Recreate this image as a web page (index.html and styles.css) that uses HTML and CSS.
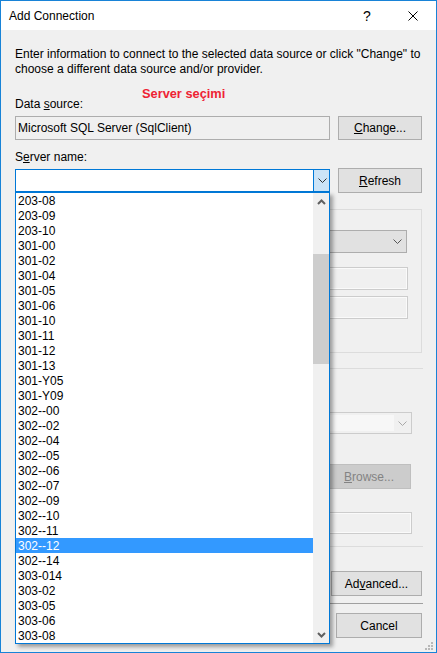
FILE: index.html
```html
<!DOCTYPE html>
<html>
<head>
<meta charset="utf-8">
<title>Add Connection</title>
<link rel="stylesheet" href="styles.css">
</head>
<body>
<div class="window">
  <div class="titlebar">
    <span class="title">Add Connection</span>
    <span class="tb-btn help">?</span>
    <span class="tb-btn close">
      <svg width="10" height="10" viewBox="0 0 10 10"><path d="M0.5 0.5 L9.5 9.5 M9.5 0.5 L0.5 9.5" stroke="#000" stroke-width="1" fill="none"/></svg>
    </span>
  </div>
  <div class="content">
    <p class="intro">Enter information to connect to the selected data source or click "Change" to<br>choose a different data source and/or provider.</p>
    <div class="label lbl-data">Data <u>s</u>ource:</div>
    <div class="row row-data">
      <div class="textbox readonly">Microsoft SQL Server (SqlClient)</div>
      <div class="button"><u>C</u>hange...</div>
    </div>
    <div class="label lbl-server">S<u>e</u>rver name:</div>
    <div class="row row-server">
      <div class="combo focused">
        <div class="combo-input"></div>
        <div class="combo-arrow">
          <svg width="9" height="5" viewBox="0 0 9 5"><polyline points="0.5,0.5 4.5,4.5 8.5,0.5" fill="none" stroke="#333" stroke-width="1"/></svg>
        </div>
        <div class="dropdown">
          <ul class="items">
            <li>203-08</li><li>203-09</li><li>203-10</li><li>301-00</li><li>301-02</li>
            <li>301-04</li><li>301-05</li><li>301-06</li><li>301-10</li><li>301-11</li>
            <li>301-12</li><li>301-13</li><li>301-Y05</li><li>301-Y09</li><li>302--00</li>
            <li>302--02</li><li>302--04</li><li>302--05</li><li>302--06</li><li>302--07</li>
            <li>302--09</li><li>302--10</li><li>302--11</li><li class="selected">302--12</li><li>302--14</li>
            <li>303-014</li><li>303-02</li><li>303-05</li><li>303-06</li><li>303-08</li>
          </ul>
          <div class="scrollbar">
            <div class="sb-btn">
              <svg width="9" height="6" viewBox="0 0 9 6"><polyline points="1,5 4.5,1.5 8,5" fill="none" stroke="#606060" stroke-width="2"/></svg>
            </div>
            <div class="sb-gap"></div>
            <div class="sb-thumb"></div>
            <div class="sb-fill"></div>
            <div class="sb-btn">
              <svg width="9" height="6" viewBox="0 0 9 6"><polyline points="1,1 4.5,4.5 8,1" fill="none" stroke="#606060" stroke-width="2"/></svg>
            </div>
          </div>
        </div>
      </div>
      <div class="button btn-refresh"><u>R</u>efresh</div>
    </div>

    <div class="group">
      <div class="combo plain auth">
        <div class="combo-input"></div>
        <div class="combo-arrow-plain">
          <svg width="9" height="5" viewBox="0 0 9 5"><polyline points="0.5,0.5 4.5,4.5 8.5,0.5" fill="none" stroke="#555" stroke-width="1"/></svg>
        </div>
      </div>
      <div class="textbox disabled tb-user"></div>
      <div class="textbox disabled tb-pass"></div>
    </div>
    <div class="hr hr1"></div>
    <div class="combo disabled-combo db">
      <div class="combo-input"></div>
      <div class="combo-arrow-plain">
        <svg width="9" height="5" viewBox="0 0 9 5"><polyline points="0.5,0.5 4.5,4.5 8.5,0.5" fill="none" stroke="#a8a8a8" stroke-width="1"/></svg>
      </div>
    </div>
    <div class="button disabled-btn browse"><u>B</u>rowse...</div>
    <div class="textbox disabled tb-logical"></div>
    <div class="hr hr2"></div>
    <div class="button advanced">Ad<u>v</u>anced...</div>
    <div class="hr dark"></div>
    <div class="row row-bottom">
      <div class="button cancel">Cancel</div>
    </div>
  </div>
  <div class="annotation">Server seçimi</div>
  <svg class="grip" width="9" height="9" viewBox="0 0 9 9">
    <rect x="6" y="0" width="2" height="2" fill="#b8b8b8"/>
    <rect x="3" y="3" width="2" height="2" fill="#b8b8b8"/>
    <rect x="6" y="3" width="2" height="2" fill="#b8b8b8"/>
    <rect x="0" y="6" width="2" height="2" fill="#b8b8b8"/>
    <rect x="3" y="6" width="2" height="2" fill="#b8b8b8"/>
    <rect x="6" y="6" width="2" height="2" fill="#b8b8b8"/>
  </svg>
</div>
</body>
</html>
```

FILE: styles.css
```css
* { box-sizing: border-box; }
html, body { margin: 0; padding: 0; }
body {
  width: 437px;
  height: 653px;
  overflow: hidden;
  font-family: "Liberation Sans", Arial, sans-serif;
  font-size: 12px;
  line-height: 15px;
  color: #000;
  background: #f0f0f0;
}
u { text-decoration: underline; text-underline-offset: 1px; }

.window {
  position: relative;
  width: 437px;
  height: 653px;
  border: 1px solid #1883d7;
  background: #f0f0f0;
  display: flex;
  flex-direction: column;
}

.titlebar {
  flex: none;
  height: 29px;
  background: #fff;
  display: flex;
  align-items: center;
  padding-left: 8px;
}
.title { flex: 1; white-space: nowrap; padding-top: 2px; }
.tb-btn {
  width: 46px;
  height: 29px;
  display: flex;
  align-items: center;
  justify-content: center;
}
.help { font-size: 14px; padding-top: 1px; }

.content {
  flex: 1;
  display: flex;
  flex-direction: column;
  padding: 17px 14px 0 14px;
}
.intro { margin: 0; white-space: nowrap; }
.label { white-space: nowrap; }
.lbl-data { margin-top: 20px; }
.lbl-server { margin-top: 10px; }

.row { display: flex; gap: 8px; align-items: flex-start; }
.row-data { margin-top: 4px; }
.row-server { margin-top: 3px; }

.textbox {
  height: 24px;
  border: 1px solid #adadad;
  background: #fff;
  padding: 1px 2px 0;
  line-height: 21px;
  white-space: nowrap;
}
.textbox.readonly { width: 315px; background: #f0f0f0; }

.button {
  flex: none;
  width: 84px;
  height: 24px;
  border: 1px solid #adadad;
  background: #e1e1e1;
  display: flex;
  align-items: center;
  justify-content: center;
  white-space: nowrap;
  padding-top: 1px;
}
.btn-refresh { height: 25px; }

.combo {
  position: relative;
  display: flex;
  width: 315px;
  height: 23px;
}
.combo.focused {
  margin-top: 1px;
  border: 1px solid #0078d7;
  background: #fff;
}
.combo-input { flex: 1; }
.combo-arrow {
  width: 16px;
  background: #cce4f7;
  border-left: 1px solid #0078d7;
  display: flex;
  align-items: center;
  justify-content: center;
  padding-left: 1px;
}
.combo-arrow-plain {
  width: 17px;
  display: flex;
  align-items: center;
  justify-content: center;
}

.dropdown {
  position: absolute;
  left: -1px;
  top: 22px;
  width: 315px;
  height: 452px;
  border: 1px solid #0078d7;
  background: #fff;
  display: flex;
  box-shadow: 3px 3px 4px rgba(0, 0, 0, 0.35);
  z-index: 10;
}
.items {
  list-style: none;
  margin: 0;
  padding: 0;
  flex: 1;
  overflow: hidden;
}
.items li {
  height: 15px;
  line-height: 15px;
  padding: 1px 0 0 2px;
  overflow: visible;
  white-space: nowrap;
}
.items li.selected { background: #3399ff; color: #fff; }

.scrollbar {
  width: 16px;
  background: #f0f0f0;
  display: flex;
  flex-direction: column;
}
.sb-btn {
  height: 17px;
  display: flex;
  align-items: center;
  justify-content: center;
}
.sb-gap { height: 44px; }
.sb-thumb { height: 110px; background: #cdcdcd; }
.sb-fill { flex: 1; }

.group {
  margin-top: 16px;
  height: 144px;
  border: 1px solid #dcdcdc;
  display: flex;
  flex-direction: column;
  align-items: flex-end;
  padding: 20px 13px 0 0;
}
.combo.plain {
  width: 230px;
  border: 1px solid #adadad;
  background: #e1e1e1;
}
.auth { margin-right: 1px; }
.textbox.disabled {
  width: 230px;
  height: 23px;
  border: 1px solid #cccccc;
  background: #f0f0f0;
  box-shadow: inset 0 0 0 1px #fafafa;
}
.tb-user { margin-top: 14px; }
.tb-pass { margin-top: 6px; }

.hr { height: 1px; background: #dcdcdc; margin-right: -1px; }
.hr1 { margin-top: 15px; }
.hr2 { margin-top: 12px; }
.hr.dark { background: #a0a0a0; margin-top: 7px; }

.combo.disabled-combo {
  align-self: flex-end;
  margin-top: 43px;
  margin-right: 10px;
  width: 260px;
  height: 22px;
  border: 1px solid #cccccc;
  background: #f0f0f0;
}
.combo.disabled-combo .combo-input { background: #f7f7f7; margin: 2px 0 2px 2px; }

.browse {
  align-self: flex-end;
  margin-top: 30px;
  margin-right: 11px;
  height: 25px;
  background: #cccccc;
  border-color: #bfbfbf;
  color: #838383;
}
.tb-logical {
  align-self: flex-end;
  margin-top: 23px;
  margin-right: 10px;
  height: 22px !important;
  width: 260px !important;
}
.advanced {
  align-self: flex-end;
  margin-top: 24px;
  width: 91px;
  height: 25px;
}
.row-bottom { justify-content: flex-end; margin-top: 9px; }
.cancel { width: 86px; height: 25px; }

.annotation {
  position: absolute;
  left: 141px;
  top: 85px;
  color: #ee2233;
  font-weight: bold;
  font-size: 12.8px;
  line-height: 15px;
  white-space: nowrap;
}
.grip {
  position: absolute;
  right: 2px;
  bottom: 1px;
}
```
